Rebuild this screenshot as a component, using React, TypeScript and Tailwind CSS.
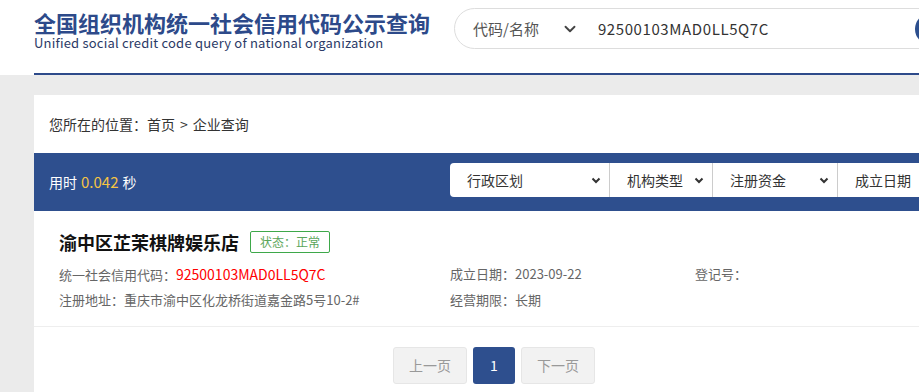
import { ChevronDown } from "lucide-react";

const filters = [
  { label: "行政区划", w: "w-[159px]", rounded: "rounded-l-[4px]" },
  { label: "机构类型", w: "w-[103px]", rounded: "" },
  { label: "注册资金", w: "w-[125px]", rounded: "" },
  { label: "成立日期", w: "w-[160px]", rounded: "" },
];

const SmallChevron = () => (
  <svg width="10" height="7" viewBox="0 0 10 7" className="shrink-0">
    <path d="M1.5 1.5 L5 5 L8.5 1.5" fill="none" stroke="#333" strokeWidth="2" />
  </svg>
);

const App = () => {
  return (
    <div
      className="min-h-screen w-[919px] overflow-hidden bg-[#ebebeb]"
      style={{ fontFamily: '"Noto Sans CJK SC", "Noto Sans", sans-serif' }}
    >
      {/* Header */}
      <div className="bg-white">
        <div className="ml-[34px] w-[1200px] h-[75px] border-b-2 border-[#2d4a8a] flex items-start">
          <div className="w-[420px] pt-[10px]">
            <h1 className="text-[22px] leading-[24px] font-bold text-[#2d4a8a]">
              全国组织机构统一社会信用代码公示查询
            </h1>
            <p className="mt-[2px] text-[13px] leading-[14px] text-[#2b3a66] tracking-[0.2px]">
              Unified social credit code query of national organization
            </p>
          </div>
          <div className="mt-[8px] h-[41px] w-[500px] rounded-full border border-[#dddddd] flex items-center pl-[18px] pr-[6px]">
            <span className="text-[15px] text-[#555] leading-none">代码/名称</span>
            <ChevronDown className="ml-[22px] w-[18px] h-[18px] text-[#444]" strokeWidth={2.5} />
            <span className="ml-[19px] text-[15px] text-[#333] leading-none tracking-[0.6px]">
              92500103MAD0LL5Q7C
            </span>
            <div className="ml-auto w-[32px] h-[32px] rounded-full bg-[#2d4f8e]" />
          </div>
        </div>
      </div>

      {/* Main card */}
      <div className="ml-[34px] mt-[20px] w-[1200px] bg-white">
        <div className="h-[58px] pl-[15px] flex items-center text-[14px] text-[#333]">
          您所在的位置：首页<span className="mx-[5px]">&gt;</span>企业查询
        </div>

        <div className="h-[58px] bg-[#2e4f8e] pl-[15px] flex items-start">
          <div className="w-[401px] h-full flex items-center text-[14px] text-white">
            用时 <span className="mx-[4px] text-[15px] text-[#f5c443]">0.042</span> 秒
          </div>
          <div className="mt-[10px] flex h-[34px]">
            {filters.map((f, i) => (
              <div
                key={f.label}
                className={`${f.w} ${f.rounded} h-full bg-white flex items-center justify-between pl-[17px] pr-[8px] text-[14px] text-[#333] ${
                  i > 0 ? "border-l border-[#cccccc]" : ""
                }`}
              >
                <span>{f.label}</span>
                <SmallChevron />
              </div>
            ))}
          </div>
        </div>

        {/* Result item */}
        <div className="pl-[25px] pt-[20px] h-[116px] border-b border-[#eeeeee]">
          <div className="flex items-center h-[22px]">
            <span className="text-[18px] font-bold text-[#111] leading-none">渝中区芷茉棋牌娱乐店</span>
            <span className="ml-[11px] h-[22px] px-[9px] border border-[#3ea84a] rounded-[2px] text-[12px] text-[#5aa55a] flex items-center">
              状态：正常
            </span>
          </div>
          <div className="mt-[13px] flex text-[13px] text-[#666] leading-[16px]">
            <div className="w-[391px]">
              统一社会信用代码：<span className="text-[14px] text-[#ff0000]">92500103MAD0LL5Q7C</span>
            </div>
            <div className="w-[245px]">成立日期：2023-09-22</div>
            <div>登记号：</div>
          </div>
          <div className="mt-[9px] flex text-[13px] text-[#666] leading-[16px]">
            <div className="w-[391px]">注册地址：重庆市渝中区化龙桥街道嘉金路5号10-2#</div>
            <div>经营期限：长期</div>
          </div>
        </div>

        {/* Pagination */}
        <div className="pt-[20px] pb-[20px] pl-[359px] flex gap-[6px]">
          <button className="w-[74px] h-[37px] rounded-[3px] bg-[#f2f2f2] border border-[#e6e6e6] text-[14px] text-[#999]">
            上一页
          </button>
          <button className="w-[42px] h-[37px] rounded-[3px] bg-[#2e4f8e] text-[14px] text-white">
            1
          </button>
          <button className="w-[74px] h-[37px] rounded-[3px] bg-[#f2f2f2] border border-[#e6e6e6] text-[14px] text-[#999]">
            下一页
          </button>
        </div>
      </div>
    </div>
  );
};

export default App;
